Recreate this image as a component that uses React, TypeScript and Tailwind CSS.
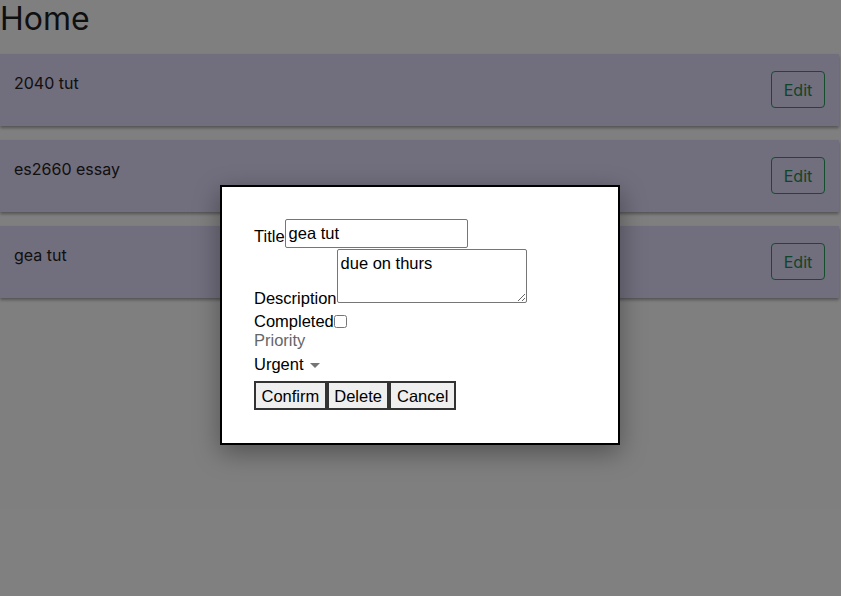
import React from "react";

const tasks = ["2040 tut", "es2660 essay", "gea tut"];

export default function App() {
  return (
    <div className="relative w-[841px] h-[596px] overflow-hidden bg-white" style={{ fontFamily: "Inter, 'Liberation Sans', sans-serif" }}>
      <h1 className="text-[32px] leading-[38px] text-[#1f1f1f] m-0 pb-[16px] font-normal">Home</h1>
      <div className="flex flex-col gap-[14px] pr-[2px]">
        {tasks.map((t) => (
          <div key={t} className="flex justify-between items-start h-[72px] bg-[#e2dcfa] pl-[14px] pr-[14px] pt-[17px] shadow-[0_2px_3px_rgba(0,0,0,0.35)]">
            <div className="text-[16px] leading-[24px] text-[#222]">{t}</div>
            <button className="w-[54px] h-[37px] border border-[#2a9a5c] rounded-[4px] text-[#1f8a50] text-[16px] bg-transparent">Edit</button>
          </div>
        ))}
      </div>

      <div className="absolute inset-0 bg-black/50" />

      <div
        className="absolute left-[220px] top-[185px] w-[400px] h-[260px] bg-white border-2 border-black p-[32px] shadow-[0_8px_24px_rgba(0,0,0,0.35)] text-black text-[16.5px]"
        style={{ fontFamily: "'Liberation Sans', Arial, sans-serif" }}
      >
        <div className="flex items-end h-[29px]">
          <span className="leading-[18px] mb-[3px]">Title</span>
          <input
            defaultValue="gea tut"
            className="w-[183px] h-[29px] border border-[#767676] rounded-[2px] px-[3px] text-[16.5px] outline-none"
          />
        </div>
        <div className="flex items-end h-[54px] mt-[1px]">
          <span className="leading-[18px] -mb-[4px]">Description</span>
          <textarea
            defaultValue="due on thurs"
            className="w-[190px] h-[54px] border border-[#767676] rounded-[2px] px-[3px] pt-[3px] text-[16.5px] leading-[20px] outline-none resize"
          />
        </div>
        <div className="flex items-center h-[18px] mt-[9px] leading-[18px]">
          <span>Completed</span>
          <input type="checkbox" className="m-0 w-[13px] h-[13px]" />
        </div>
        <div className="h-[18px] mt-[1px] leading-[18px] text-[#666]">Priority</div>
        <div className="flex items-center h-[18px] mt-[6px] leading-[18px]">
          <span>Urgent</span>
          <svg width="24" height="24" viewBox="0 0 24 24" className="-ml-[1px] mt-[2px]">
            <path d="M7 10l5 5 5-5z" fill="#757575" />
          </svg>
        </div>
        <div className="flex mt-[8px]">
          <button className="h-[29px] px-[5.5px] bg-[#efefef] border-2 border-[#333] text-[16.5px] leading-[18px]">Confirm</button>
          <button className="h-[29px] px-[5.5px] bg-[#efefef] border-2 border-[#333] text-[16.5px] leading-[18px]">Delete</button>
          <button className="h-[29px] px-[5.5px] bg-[#efefef] border-2 border-[#333] text-[16.5px] leading-[18px]">Cancel</button>
        </div>
      </div>
    </div>
  );
}
